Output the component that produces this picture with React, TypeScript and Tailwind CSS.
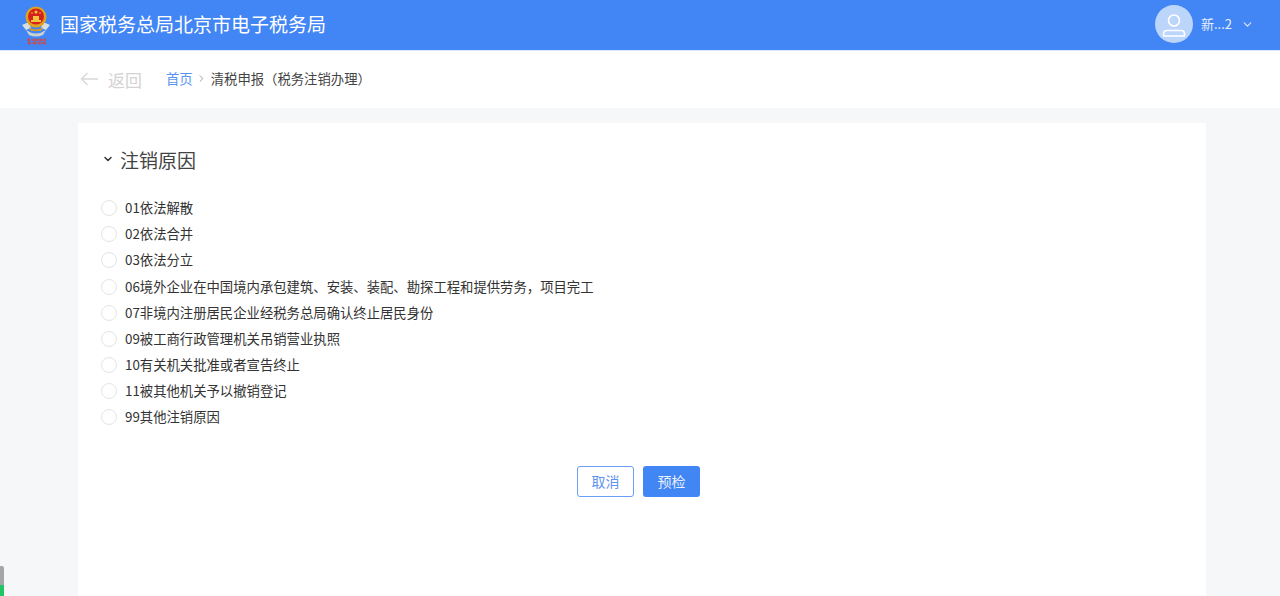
import { ChevronDown, ChevronRight } from "lucide-react";

const reasons = [
  "01依法解散",
  "02依法合并",
  "03依法分立",
  "06境外企业在中国境内承包建筑、安装、装配、勘探工程和提供劳务，项目完工",
  "07非境内注册居民企业经税务总局确认终止居民身份",
  "09被工商行政管理机关吊销营业执照",
  "10有关机关批准或者宣告终止",
  "11被其他机关予以撤销登记",
  "99其他注销原因",
];

// 税徽
function Emblem() {
  return (
    <svg width="32" height="46" viewBox="0 0 32 46" className="shrink-0">
      <path d="M2 23 L9 20 L11 26 L6 28 Z" fill="#d8dde0" />
      <path d="M30 23 L23 20 L21 26 L26 28 Z" fill="#d8dde0" />
      <path d="M6 28 Q16 35 26 28 L23 33 Q16 36 9 33 Z" fill="#c9ced0" />
      <circle cx="16" cy="15" r="10.5" fill="#e0a21d" />
      <circle cx="16" cy="14.5" r="8" fill="#d4211c" />
      <path d="M11 18 H21 V20 H11 Z M13 14 H19 V18 H13 Z" fill="#f2c53c" />
      <circle cx="16" cy="10" r="1.6" fill="#f2c53c" />
      <circle cx="12" cy="11" r="0.8" fill="#f2c53c" />
      <circle cx="20" cy="11" r="0.8" fill="#f2c53c" />
      <path d="M9 25 Q16 30 23 25 L21 29 H11 Z" fill="#d79a22" />
      <path d="M7 38 H26 M8 41 H25" stroke="#d9453a" strokeWidth="1.4" strokeDasharray="3 1.5" />
      <path d="M9 36 V43 M15 36 V43 M20 36 V43 M25 36 V43" stroke="#d9453a" strokeWidth="1" />
    </svg>
  );
}

function Avatar() {
  return (
    <div className="w-[38px] h-[38px] rounded-full bg-[#bcd5fb] flex items-center justify-center">
      <svg width="26" height="26" viewBox="0 0 26 26" fill="none" stroke="#fff" strokeWidth="1.6">
        <circle cx="13" cy="9.5" r="5.5" />
        <path d="M2.5 25 V23 Q2.5 19.5 6 19.5 H20 Q23.5 19.5 23.5 23 V25 Z" strokeLinejoin="round" />
      </svg>
    </div>
  );
}

export default function App() {
  return (
    <div className="h-screen overflow-hidden relative flex flex-col bg-[#f6f7f9] font-['Noto_Sans_CJK_SC','Noto_Sans',sans-serif] text-[#333]">
      {/* 顶部 */}
      <header className="h-[51px] shrink-0 bg-[#4285f4] border-b border-[#dbe7fb] flex items-center justify-between pl-[20px] pr-[26px]">
        <div className="flex items-center gap-[8px]">
          <Emblem />
          <h1 className="text-[19px] leading-none text-white -mt-[3px]">国家税务总局北京市电子税务局</h1>
        </div>
        <div className="flex items-center -mt-[2px]">
          <Avatar />
          <span className="ml-2 text-[13px] text-[#e8f0fe] -mt-[1px]">新...2</span>
          <ChevronDown className="ml-[9px] text-[#dce8fc]" size={13} />
        </div>
      </header>

      {/* 面包屑 */}
      <div className="h-[57px] shrink-0 bg-white flex items-center pl-[80px]">
        <div className="flex items-center text-[#d3d3d3] mt-[-1px]">
          <svg width="19" height="14" viewBox="0 0 19 14" fill="none" stroke="#d8d8d8" strokeWidth="1.4">
            <path d="M18 7 H1.5 M7.5 1 L1.5 7 L7.5 13" />
          </svg>
          <span className="ml-[9px] text-[17px] leading-none">返回</span>
        </div>
        <nav className="ml-[24px] flex items-center text-[13.35px] -mt-[1px]">
          <span className="text-[#5a94f2]">首页</span>
          <ChevronRight className="mx-[3.5px] text-[#999]" size={11} />
          <span className="text-[#444]">清税申报（税务注销办理）</span>
        </nav>
      </div>

      {/* 内容 */}
      <main className="flex-1 mt-[15px] ml-[78px] mr-[74px] bg-white pl-[23px]">
        <div className="flex items-center mt-[22px] h-[28px] ml-[1px]">
          <ChevronDown className="text-[#333]" size={12} strokeWidth={3} />
          <h2 className="ml-[6px] text-[19px] leading-none text-[#444]">注销原因</h2>
        </div>
        <ul className="mt-[21.4px] flex flex-col">
          {reasons.map((r) => (
            <li key={r} className="h-[26.2px] flex items-center text-[13.35px] text-[#333]">
              <span className="w-4 h-4 mt-[1px] rounded-full border border-[#e4e4e4] bg-white shrink-0" />
              <span className="ml-[8px] mt-[1px]">{r}</span>
            </li>
          ))}
        </ul>
        <div className="mt-[35.6px] flex justify-center gap-[9px] pr-[30px]">
          <button className="w-[57px] h-[31px] rounded-[3px] border border-[#6b9ef5] bg-white text-[14px] text-[#5d93f0]">
            取消
          </button>
          <button className="w-[57px] h-[31px] rounded-[3px] bg-[#4285f4] text-[14px] text-[#eaf2fe]">
            预检
          </button>
        </div>
      </main>

      {/* 左下角悬浮条 */}
      <div className="absolute left-0 bottom-0 w-[4px] h-[30px] flex flex-col rounded-tr-[2px] overflow-hidden">
        <div className="h-[19px] bg-[#a6a6a6]" />
        <div className="flex-1 bg-[#22c565]" />
      </div>
    </div>
  );
}
